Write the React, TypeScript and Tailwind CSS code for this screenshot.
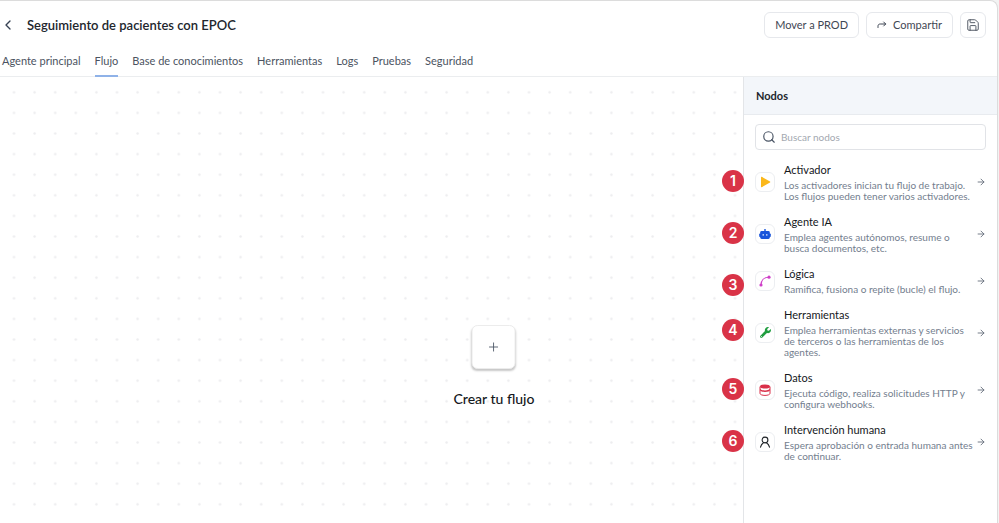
import React, { useState } from "react";
import { ArrowRight, ChevronLeft, Plus, Save, Search } from "lucide-react";
import { FaWrench } from "react-icons/fa";

const TABS = [
    "Agente principal",
    "Flujo",
    "Base de conocimientos",
    "Herramientas",
    "Logs",
    "Pruebas",
    "Seguridad",
];

function PlayIcon() {
    return (
        <svg viewBox="0 0 12 12" className="w-3 h-3" aria-hidden="true">
            <path d="M2 1.2v9.6c0 .4.4.6.8.4l8.2-4.7c.4-.2.4-.8 0-1L2.8.8C2.4.6 2 .8 2 1.2z" fill="#fbb81b" />
        </svg>
    );
}

function RobotIcon() {
    return (
        <svg viewBox="0 0 12 12" className="w-3 h-3" aria-hidden="true">
            <path d="M5.3 1h1.4v2.6H5.3z" fill="#1a56db" />
            <rect x="1.2" y="3" width="9.6" height="8" rx="1.4" fill="#1a56db" />
            <rect x="0.2" y="5.4" width="11.6" height="3.6" rx="0.8" fill="#1a56db" />
            <circle cx="4.2" cy="6.9" r="0.8" fill="#cfe0ff" />
            <circle cx="7.8" cy="6.9" r="0.8" fill="#cfe0ff" />
        </svg>
    );
}

function CurveIcon() {
    return (
        <svg viewBox="0 0 12 12" className="w-3 h-3" aria-hidden="true">
            <path d="M2 10C2 5.5 5 2.2 10 2.2" fill="none" stroke="#cf3fc8" strokeWidth="1.1" />
            <circle cx="2" cy="10" r="1.6" fill="#cf3fc8" />
            <circle cx="10" cy="2.2" r="1.6" fill="#cf3fc8" />
        </svg>
    );
}

function DatabaseIcon() {
    return (
        <svg viewBox="0 0 12 12" className="w-3 h-3" aria-hidden="true">
            <ellipse cx="6" cy="2.6" rx="5" ry="2" fill="#d92f49" />
            <path d="M1 2.6v6.8c0 1.1 2.2 2 5 2s5-.9 5-2V2.6" fill="none" stroke="#d92f49" strokeWidth="1" />
            <path d="M1 4.2c0 1.3 2.2 2.2 5 2.2s5-.9 5-2.2v1.7c0 1.2-2.2 2-5 2s-5-.8-5-2z" fill="#d92f49" />
        </svg>
    );
}

function PersonIcon() {
    return (
        <svg
            viewBox="0 0 12 12"
            className="w-3 h-3"
            fill="none"
            stroke="#1f2328"
            strokeWidth="1.1"
            strokeLinecap="round"
            aria-hidden="true"
        >
            <circle cx="6" cy="4" r="2.9" />
            <path d="M1.500 11.200C2 8.900 3.200 7.500 4.500 6.700M7.500 6.700c1.300.8 2.500 2.200 3 4.500" />
        </svg>
    );
}

function ShareIcon() {
    return (
        <svg
            viewBox="0 0 10 8"
            className="w-[10px] h-2"
            fill="none"
            stroke="currentColor"
            strokeWidth="1"
            strokeLinecap="round"
            strokeLinejoin="round"
            aria-hidden="true"
        >
            <path d="M1 6.5V5.2C1 3.8 1.8 3 3.2 3H8.7" />
            <path d="M6.7 1l2 2-2 2" />
        </svg>
    );
}

const NODES = [
    {
        title: "Activador",
        description: "Los activadores inician tu flujo de trabajo. Los flujos pueden tener varios activadores.",
        icon: <PlayIcon />,
        badge: "top-2",
    },
    {
        title: "Agente IA",
        description: "Emplea agentes autónomos, resume o busca documentos, etc.",
        icon: <RobotIcon />,
        badge: "top-2",
    },
    {
        title: "Lógica",
        description: "Ramifica, fusiona o repite (bucle) el flujo.",
        icon: <CurveIcon />,
        badge: "top-2",
    },
    {
        title: "Herramientas",
        description: "Emplea herramientas externas y servicios de terceros o las herramientas de los agentes.",
        icon: <FaWrench className="w-[11px] h-[11px] text-[#1f9d3f]" />,
        badge: "top-3",
    },
    {
        title: "Datos",
        description: "Ejecuta código, realiza solicitudes HTTP y configura webhooks.",
        icon: <DatabaseIcon />,
        badge: "top-2",
    },
    {
        title: "Intervención humana",
        description: "Espera aprobación o entrada humana antes de continuar.",
        icon: <PersonIcon />,
        badge: "top-2",
    },
];

export default function App() {
    const [activeTab, setActiveTab] = useState("Flujo");
    const [searchTerm, setSearchTerm] = useState("");

    const nodes = NODES.filter((node) => node.title.toLowerCase().includes(searchTerm.toLowerCase()));

    return (
        <div className="min-h-screen flex bg-[#f3f3f3] pr-px font-[Lato,'Open_Sans',sans-serif]">
            <div className="flex-1 min-w-0 flex flex-col bg-white border-t border-r border-[#dcdcdc] rounded-tr-lg">
                <header className="border-b border-[#ebedef]">
                    <div className="flex items-center justify-between pt-[11px] pr-[11px]">
                        <div className="flex items-center gap-[11px]">
                            <button type="button" aria-label="Volver" className="text-gray-700">
                                <ChevronLeft className="w-4 h-4" strokeWidth={2} />
                            </button>
                            <h1 className="text-[13px] leading-4 font-semibold text-[#22262d]">Seguimiento de pacientes con EPOC</h1>
                        </div>
                        <div className="flex items-center gap-[7px] text-[11px] leading-4 text-[#3f4754]">
                            <button type="button" className="h-[26px] px-[10px] border border-[#e6e8ec] rounded-md">
                                Mover a PROD
                            </button>
                            <button
                                type="button"
                                className="h-[26px] px-[10px] flex items-center gap-[6px] border border-[#e6e8ec] rounded-md"
                            >
                                <ShareIcon />
                                Compartir
                            </button>
                            <button
                                type="button"
                                aria-label="Guardar"
                                className="w-[26px] h-[26px] flex items-center justify-center border border-[#e6e8ec] rounded-md"
                            >
                                <Save className="w-[14px] h-[14px]" strokeWidth={1.5} />
                            </button>
                        </div>
                    </div>
                    <nav role="tablist" className="flex gap-[14px] mt-[15px] -mb-px pl-[2px]">
                        {TABS.map((tab) => (
                            <button
                                key={tab}
                                type="button"
                                role="tab"
                                aria-selected={tab === activeTab}
                                onClick={() => setActiveTab(tab)}
                                className={`pb-[6px] text-[11px] leading-4 text-[#4b5361] border-b-2 ${
                                    tab === activeTab ? "border-[#8fb2e8]" : "border-transparent"
                                }`}
                            >
                                {tab}
                            </button>
                        ))}
                    </nav>
                </header>

                <div className="flex-1 flex">
                    <main className="relative flex-1">
                        {/* Dotted canvas */}
                        <svg className="absolute inset-0 w-full h-full" aria-hidden="true">
                            <pattern id="dots" x="3.7" y="5" width="20.6" height="20.6" patternUnits="userSpaceOnUse">
                                <circle cx="10.3" cy="10.3" r="1.2" fill="#ececee" />
                            </pattern>
                            <rect width="100%" height="100%" fill="url(#dots)" />
                        </svg>
                        <div className="absolute left-[494px] top-[248px] -translate-x-1/2 flex flex-col items-center gap-5">
                            <button
                                type="button"
                                aria-labelledby="create-flow"
                                className="w-11 h-11 flex items-center justify-center bg-white border border-[#ececec] rounded-md shadow-[0_2px_2px_rgba(0,0,0,0.22)] text-gray-600"
                            >
                                <Plus className="w-[14px] h-[14px]" strokeWidth={1.5} />
                            </button>
                            <span id="create-flow" className="text-[14px] leading-5 font-medium text-[#15181c] whitespace-nowrap">
                                Crear tu flujo
                            </span>
                        </div>
                    </main>

                    <aside className="w-[254px] shrink-0 bg-white border-l border-[#e3e5e8]">
                        <div className="px-3 pt-[11px] pb-[10px] bg-[#f3f6fa] border-b border-[#e8ebef]">
                            <h2 className="text-[11px] leading-4 font-bold text-[#22262d]">Nodos</h2>
                        </div>
                        <div className="px-[11px] pt-[9px]">
                            <label className="flex items-center gap-[5px] h-[26px] px-[6px] border border-[#e1e3e7] rounded-sm">
                                <Search className="w-[14px] h-[14px] shrink-0 text-gray-600" strokeWidth={2} />
                                <input
                                    type="text"
                                    aria-label="Buscar nodos"
                                    placeholder="Buscar nodos"
                                    value={searchTerm}
                                    onChange={(e) => setSearchTerm(e.target.value)}
                                    className="w-full text-[10px] leading-4 text-gray-700 placeholder:text-[#a3a8b0] outline-none"
                                />
                            </label>
                        </div>
                        <ol className="flex flex-col gap-3 px-[11px] pt-3 pb-4">
                            {nodes.map((node) => (
                                <li key={node.title} className="relative">
                                    <button type="button" className="w-full flex items-center text-left">
                                        <span className="w-5 h-5 mr-[9px] shrink-0 flex items-center justify-center bg-white border border-[#eceef1] rounded-md">
                                            {node.icon}
                                        </span>
                                        <span className="flex-1 flex flex-col gap-[2px]">
                                            <span className="text-[11px] leading-4 text-[#15181c]">{node.title}</span>
                                            <span className="text-[10px] leading-[11px] text-[#737e8e]">{node.description}</span>
                                        </span>
                                        <ArrowRight className="w-[10px] h-[10px] shrink-0 text-[#5a6472]" />
                                    </button>
                                    <span
                                        className={`absolute -left-[33px] ${node.badge} w-[22px] h-[22px] flex items-center justify-center rounded-full bg-[#d93347] font-[Inter,sans-serif] text-[14px] leading-4 font-semibold text-white`}
                                    >
                                        {NODES.indexOf(node) + 1}
                                    </span>
                                </li>
                            ))}
                        </ol>
                    </aside>
                </div>
            </div>
        </div>
    );
}
